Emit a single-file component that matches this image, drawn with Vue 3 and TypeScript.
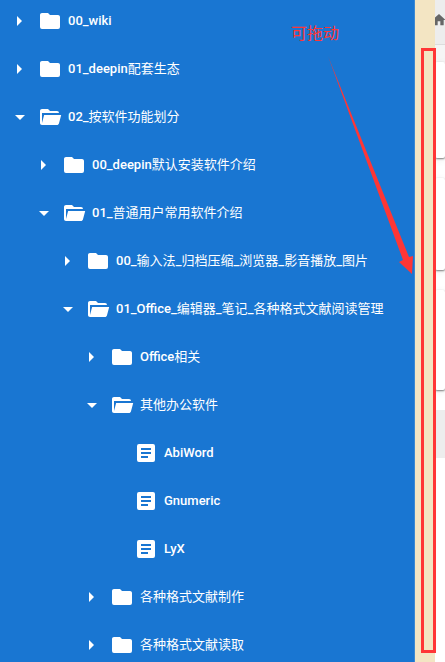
<script setup lang="ts">
type Kind = 'closed' | 'open' | 'file'

interface TreeRow {
  label: string
  depth: number
  kind: Kind
}

const rows: TreeRow[] = [
  { label: '00_wiki', depth: 0, kind: 'closed' },
  { label: '01_deepin配套生态', depth: 0, kind: 'closed' },
  { label: '02_按软件功能划分', depth: 0, kind: 'open' },
  { label: '00_deepin默认安装软件介绍', depth: 1, kind: 'closed' },
  { label: '01_普通用户常用软件介绍', depth: 1, kind: 'open' },
  { label: '00_输入法_归档压缩_浏览器_影音播放_图片', depth: 2, kind: 'closed' },
  { label: '01_Office_编辑器_笔记_各种格式文献阅读管理', depth: 2, kind: 'open' },
  { label: 'Office相关', depth: 3, kind: 'closed' },
  { label: '其他办公软件', depth: 3, kind: 'open' },
  { label: 'AbiWord', depth: 4, kind: 'file' },
  { label: 'Gnumeric', depth: 4, kind: 'file' },
  { label: 'LyX', depth: 4, kind: 'file' },
  { label: '各种格式文献制作', depth: 3, kind: 'closed' },
  { label: '各种格式文献读取', depth: 3, kind: 'closed' },
]

// Splits a label into Latin and Chinese runs, which carry different weights.
function runs(label: string): string[] {
  return label.match(/[\x00-\x7f]+|[^\x00-\x7f]+/g) ?? []
}

function isLatin(run: string): boolean {
  return run.charCodeAt(0) < 128
}

const icons: Record<Kind, string> = {
  closed: 'M10 4H4c-1.11 0-2 .89-2 2v12a2 2 0 0 0 2 2h16a2 2 0 0 0 2-2V8c0-1.11-.9-2-2-2h-8l-2-2z',
  open: 'M19 20H4c-1.11 0-2-.9-2-2V6c0-1.11.89-2 2-2h6l2 2h7a2 2 0 0 1 2 2H4v10l2.14-8h17.07l-2.28 8.5c-.23.87-1.01 1.5-1.93 1.5z',
  file: 'M14 17H7v-2h7v2m3-4H7v-2h10v2m0-4H7V7h10v2m2-6H5a2 2 0 0 0-2 2v14a2 2 0 0 0 2 2h14a2 2 0 0 0 2-2V5a2 2 0 0 0-2-2z',
}
const arrows: Record<'closed' | 'open', string> = {
  closed: 'M9 7v10l5-5z',
  open: 'M7 10l5 5 5-5z',
}
</script>

<template>
  <div class="app">
    <nav class="sidebar">
      <ul class="tree">
        <li v-for="row in rows" :key="row.label" class="row" :style="{ paddingLeft: 8 + row.depth * 24 + 'px' }">
          <button v-if="row.kind !== 'file'" class="toggle" type="button" :aria-label="row.label" :aria-expanded="row.kind === 'open'">
            <svg class="icon" viewBox="0 0 24 24"><path :d="arrows[row.kind]" /></svg>
          </button>
          <span v-else class="toggle"></span>
          <a class="link" href="#">
            <svg class="icon" viewBox="0 0 24 24"><path :d="icons[row.kind]" /></svg>
            <span><span v-for="(run, i) in runs(row.label)" :key="i" :class="{ latin: isLatin(run) }">{{ run }}</span></span>
          </a>
        </li>
      </ul>
    </nav>
    <div class="splitter"></div>
    <main class="content">
      <header class="crumbs">
        <a class="home" href="#" aria-label="Home">
          <svg viewBox="0 0 24 24"><path d="M10 20v-6h4v6h5v-8h3L12 3 2 12h3v8z" /></svg>
        </a>
      </header>
      <div class="cards">
        <section class="card"></section>
        <section class="card short"></section>
        <section class="card tall"></section>
      </div>
      <div class="strip"></div>
    </main>
    <div class="frame"></div>
    <div class="note">可拖动</div>
    <svg class="arrow" viewBox="0 0 90 224"><path d="M3 1L84 202L88 201L87 219L74 207L78 205z" /></svg>
  </div>
</template>

<style>
body {
  overflow: hidden;
}
</style>

<style scoped>
.app {
  position: relative;
  display: flex;
  height: 100vh;
  overflow: hidden;
  background: #fff;
  font-family: Roboto, 'Noto Sans CJK SC', sans-serif;
}
.sidebar {
  flex: 1;
  min-width: 0;
  overflow: hidden;
  background: #1976d2;
  border-right: 1px solid #3c89d3;
}
.tree {
  list-style: none;
  margin: -3px 0 0;
  padding: 0;
}
.row {
  display: flex;
  align-items: center;
  gap: 6px;
  height: 48px;
}
.toggle {
  width: 24px;
  height: 24px;
  padding: 0;
  border: 0;
  background: none;
}
.icon {
  display: block;
  flex: none;
  width: 24px;
  height: 24px;
  fill: #fff;
}
.link {
  display: flex;
  align-items: center;
  gap: 6px;
  color: #fff;
  font-size: 13px;
  line-height: 20px;
  white-space: nowrap;
  text-decoration: none;
}
.latin {
  font-weight: 500;
}
.splitter {
  width: 20px;
  background: #f3e5c3;
  cursor: col-resize;
}
.content {
  width: 10px;
  overflow: hidden;
  background: #fff;
}
.crumbs {
  height: 44px;
  border-bottom: 1px solid #ddd;
  background: #ededed;
}
.home {
  display: block;
  padding-top: 12px;
}
.home svg {
  display: block;
  width: 16px;
  height: 16px;
  margin-left: -4px;
  fill: #666;
}
.cards {
  display: grid;
  gap: 20px;
  padding: 17px 0 20px;
  background: linear-gradient(#f5f5f5 17px, #fff 17px);
}
.card {
  height: 96px;
  border-radius: 2px;
  background: #fff;
  box-shadow: 0 1px 2px rgba(0, 0, 0, 0.5), 0 2px 8px rgba(0, 0, 0, 0.08);
}
.short {
  height: 92px;
}
.tall {
  height: 100px;
}
.strip {
  height: 48px;
  background: #ededed;
}
.frame {
  position: absolute;
  top: 48px;
  right: 9px;
  bottom: 9px;
  width: 9px;
  border: 3px solid #ff3636;
}
.note {
  position: absolute;
  top: 22px;
  right: 106px;
  color: #ff3636;
  font-size: 16px;
  line-height: 24px;
}
.arrow {
  position: absolute;
  top: 55px;
  right: 30px;
  width: 90px;
  height: 224px;
  fill: #ff3636;
}
</style>
